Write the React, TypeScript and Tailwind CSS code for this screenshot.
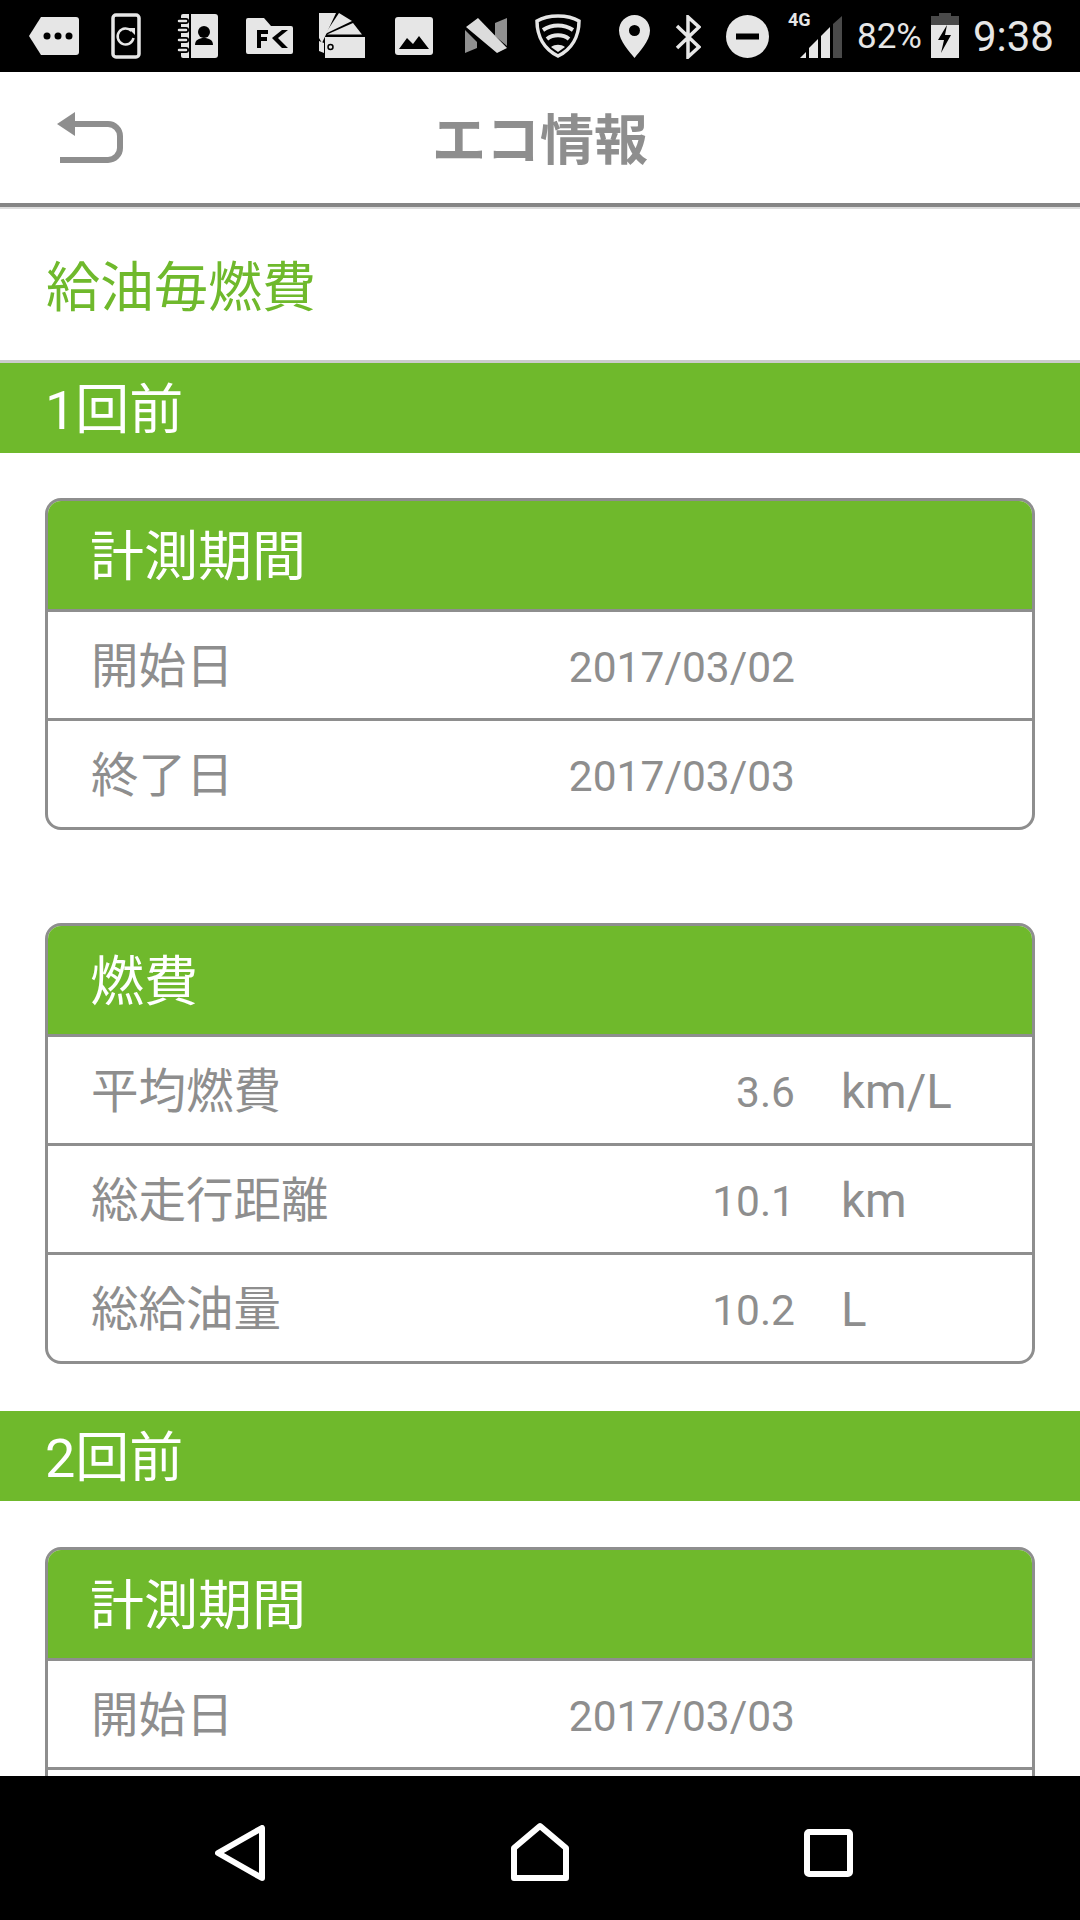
const sans = 'font-["Roboto","Noto_Sans_CJK_JP",sans-serif]'

function StatusIcons() {
  return (
    <div className="flex h-[72px] shrink-0 items-start bg-black text-[#e6e6e6]">
      {/* tag */}
      <svg className="ml-[29px] mt-[17px]" width="50" height="38" viewBox="0 0 50 38">
        <path d="M12 0H47a3 3 0 0 1 3 3V35a3 3 0 0 1-3 3H12L0 19Z" fill="currentColor" />
        <circle cx="18" cy="19" r="3.500" fill="#000" />
        <circle cx="29" cy="19" r="3.500" fill="#000" />
        <circle cx="40" cy="19" r="3.500" fill="#000" />
      </svg>
      {/* phone refresh */}
      <svg className="ml-[32px] mt-[13px]" width="30" height="46" viewBox="0 0 30 46">
        <rect x="2" y="2" width="26" height="42" rx="3" fill="none" stroke="currentColor" strokeWidth="3.500" />
        <path d="M20.500 18a8 8 0 1 0 2 7" fill="none" stroke="currentColor" strokeWidth="2.500" />
        <path d="M17 15h7v7Z" fill="currentColor" />
      </svg>
      {/* contacts */}
      <svg className="ml-[36px] mt-[14px]" width="41" height="44" viewBox="0 0 41 44">
        <path d="M6 0H12V44H6a2 2 0 0 1-2-2V2a2 2 0 0 1 2-2Z" fill="currentColor" />
        <g fill="none" strokeLinecap="round">
          <path d="M2 7H9M2 16H9M2 26H9M2 36H9" stroke="#000" strokeWidth="6" />
          <path d="M2 7H9M2 16H9M2 26H9M2 36H9" stroke="currentColor" strokeWidth="2.500" />
        </g>
        <path d="M14 0H38a3 3 0 0 1 3 3V41a3 3 0 0 1-3 3H14Z" fill="currentColor" />
        <circle cx="27" cy="18" r="6" fill="#000" />
        <path d="M18 31c0-5 4-7 9-7s9 2 9 7Z" fill="#000" />
      </svg>
      {/* folder FK */}
      <svg className="ml-[28px] mt-[18px]" width="47" height="36" viewBox="0 0 47 36">
        <path d="M2 0H18L25 8H45a2 2 0 0 1 2 2V34a2 2 0 0 1-2 2H2a2 2 0 0 1-2-2V2a2 2 0 0 1 2-2Z" fill="currentColor" />
        <path d="M11 12H22V16H15V19H21V23H15V30H11Z" fill="#000" />
        <path d="M36 12H42L32 20L42 30H36L26 20Z" fill="#000" />
      </svg>
      {/* fan deck */}
      <svg className="ml-[26px] mt-[13px]" width="46" height="45" viewBox="0 0 46 45">
        <path d="M0 0H17L3 30L0 25Z" fill="currentColor" />
        <path d="M20 0L33 8L6 21Z" fill="currentColor" />
        <path d="M34 10L43 21.500H8Z" fill="currentColor" />
        <path d="M6 24H46V45H6Z" fill="currentColor" />
        <path d="M0 28L5 30V40L0 38Z" fill="currentColor" />
        <circle cx="11.500" cy="34" r="2.500" fill="none" stroke="#000" strokeWidth="1.500" />
      </svg>
      {/* image */}
      <svg className="ml-[30px] mt-[17px]" width="38" height="38" viewBox="0 0 38 38">
        <rect width="38" height="38" rx="3" fill="currentColor" />
        <path d="M4 32L12 21L18 27L24 19L34 32Z" fill="#000" />
      </svg>
      {/* N */}
      <svg className="ml-[32px] mt-[18px]" width="42" height="36" viewBox="0 0 42 36">
        <path d="M0 12L12 24V30L0 35Z" fill="#909090" />
        <path d="M30 5L42 0V28L30 18Z" fill="#909090" />
        <path d="M1 9L13 0L42 30L32 35Z" fill="#dcdcdc" />
      </svg>
      {/* shield wifi */}
      <svg className="ml-[28px] mt-[14px]" width="46" height="44" viewBox="0 0 46 44">
        <path d="M23 2C31 2 39 4 44 7C44 22 37 35 23 42C9 35 2 22 2 7C7 4 15 2 23 2Z" fill="none" stroke="currentColor" strokeWidth="3.500" />
        <path d="M8 16C17 10 29 10 38 16" fill="none" stroke="currentColor" strokeWidth="4" />
        <path d="M12 25C18 20 28 20 34 25" fill="none" stroke="currentColor" strokeWidth="4" />
        <path d="M16 33C20 30 26 30 30 33L23 38Z" fill="currentColor" />
      </svg>
      {/* pin */}
      <svg className="ml-[38px] mt-[15px]" width="31" height="43" viewBox="0 0 31 43">
        <path d="M15.500 0C24 0 31 7 31 15.500C31 26 20 37 15.500 43C11 37 0 26 0 15.500C0 7 7 0 15.500 0Z" fill="currentColor" />
        <circle cx="15.500" cy="15.500" r="5.500" fill="#000" />
      </svg>
      {/* bluetooth */}
      <svg className="ml-[25px] mt-[15px]" width="26" height="44" viewBox="0 0 26 44">
        <path d="M2 11L24 32L13 42V2L24 12L2 33" fill="none" stroke="currentColor" strokeWidth="3.500" />
      </svg>
      {/* do not disturb */}
      <svg className="ml-[25px] mt-[15px]" width="43" height="43" viewBox="0 0 43 43">
        <circle cx="21.500" cy="21.500" r="21.500" fill="currentColor" />
        <rect x="10" y="18.500" width="23" height="6" fill="#000" />
      </svg>
      {/* signal with 4G */}
      <div className="relative ml-[19px] h-[72px] w-[54px]">
        <span className={`absolute left-0 top-[10px] text-[18px] leading-[20px] font-bold ${sans}`}>4G</span>
        <svg className="absolute left-[12px] top-[16px]" width="42" height="42" viewBox="0 0 42 42">
          <path d="M0 42L6 36V42Z" fill="currentColor" />
          <path d="M9 42V32L18 23V42Z" fill="currentColor" />
          <path d="M21 42V20L30 11V42Z" fill="currentColor" />
          <path d="M33 42V8L42 0V42Z" fill="#4a4a4a" />
        </svg>
      </div>
      <span className={`ml-[15px] mt-[15px] text-[35px] leading-[44px] ${sans}`}>82%</span>
      {/* battery */}
      <svg className="ml-[9px] mt-[13px]" width="28" height="45" viewBox="0 0 28 45">
        <path d="M8 0H20V3H28V45H0V3H8Z" fill="currentColor" />
        <path d="M8 0H20V3H28V12H0V3H8Z" fill="#4a4a4a" />
        <path d="M16 12L7 27H13L10 40L20 22H14Z" fill="#000" />
      </svg>
      <span className={`ml-[14px] mt-[14px] text-[42px] leading-[46px] ${sans}`}>9:38</span>
    </div>
  )
}

function AppBar() {
  return (
    <div className="shrink-0">
      <div className="relative flex h-[135px] items-center justify-center border-b-[4px] border-[#858585] bg-white pt-[9px]">
        <svg className="absolute left-[57px] top-[40px]" width="68" height="52" viewBox="0 0 68 52" fill="none">
          <path d="M0 12L18 0V24Z" fill="#8e8e8e" />
          <path d="M14 12H51a12 12 0 0 1 12 12V36a12 12 0 0 1-12 12H3" stroke="#8e8e8e" strokeWidth="6" />
        </svg>
        <span className={`text-[54px] leading-none font-bold text-[#8e8e8e] ${sans}`}>エコ情報</span>
      </div>
      <div className="h-[2px] bg-[#dddddd]" />
    </div>
  )
}

function SectionBand({ label }: { label: string }) {
  return (
    <div className={`flex h-[90px] shrink-0 items-center bg-[#6fb92c] pl-[45px] pt-[6px] text-[54px] leading-none text-white ${sans}`}>
      {label}
    </div>
  )
}

function Row({ label, value, unit }: { label: string; value: string; unit?: string }) {
  return (
    <div className={`flex h-[109px] shrink-0 items-center border-t-[3px] border-[#8e8e8e] pl-[43px] pt-[6px] text-[#8e8e8e] ${sans}`}>
      <span className="text-[47.500px] leading-none">{label}</span>
      <span className="ml-auto text-[42.500px] leading-none">{value}</span>
      <span className="ml-[46px] w-[191px] text-[47.500px] leading-none">{unit}</span>
    </div>
  )
}

function Card({ title, children }: { title: string; children: React.ReactNode }) {
  return (
    <div className="mx-[45px] overflow-hidden rounded-[16px] border-[3px] border-[#8e8e8e] bg-white">
      <div className={`flex h-[108px] items-center bg-[#6fb92c] pl-[42px] pt-[6px] text-[54px] leading-none text-white ${sans}`}>{title}</div>
      {children}
    </div>
  )
}

export default function App() {
  return (
    <div className="flex h-[1920px] w-[1080px] flex-col overflow-hidden bg-white">
      <StatusIcons />
      <AppBar />
      <div className="min-h-0 flex-1 overflow-hidden">
        <div className={`flex h-[154px] items-center border-b-[3px] border-[#cccccc] pl-[46px] pt-[9px] text-[54px] leading-none text-[#6fb92c] ${sans}`}>
          給油毎燃費
        </div>
        <SectionBand label="1回前" />
        <div className="pt-[45px]">
          <Card title="計測期間">
            <Row label="開始日" value="2017/03/02" />
            <Row label="終了日" value="2017/03/03" />
          </Card>
        </div>
        <div className="pt-[93px] pb-[47px]">
          <Card title="燃費">
            <Row label="平均燃費" value="3.6" unit="km/L" />
            <Row label="総走行距離" value="10.1" unit="km" />
            <Row label="総給油量" value="10.2" unit="L" />
          </Card>
        </div>
        <SectionBand label="2回前" />
        <div className="pt-[46px]">
          <Card title="計測期間">
            <Row label="開始日" value="2017/03/03" />
            <Row label="終了日" value="2017/03/04" />
          </Card>
        </div>
      </div>
      <div className="flex h-[144px] shrink-0 items-start bg-black text-white">
        <svg className="ml-[215px] mt-[49px]" width="51" height="56" viewBox="0 0 51 56" fill="none">
          <path d="M47 3V53L3 28Z" stroke="currentColor" strokeWidth="6" strokeLinejoin="round" />
        </svg>
        <svg className="ml-[245px] mt-[46px]" width="58" height="59" viewBox="0 0 58 59" fill="none">
          <path d="M3 56V26L29 4L55 26V56Z" stroke="currentColor" strokeWidth="6" strokeLinejoin="round" />
        </svg>
        <svg className="ml-[235px] mt-[53px]" width="49" height="48" viewBox="0 0 49 48" fill="none">
          <rect x="3" y="3" width="43" height="42" rx="2" stroke="currentColor" strokeWidth="6" />
        </svg>
      </div>
    </div>
  )
}
